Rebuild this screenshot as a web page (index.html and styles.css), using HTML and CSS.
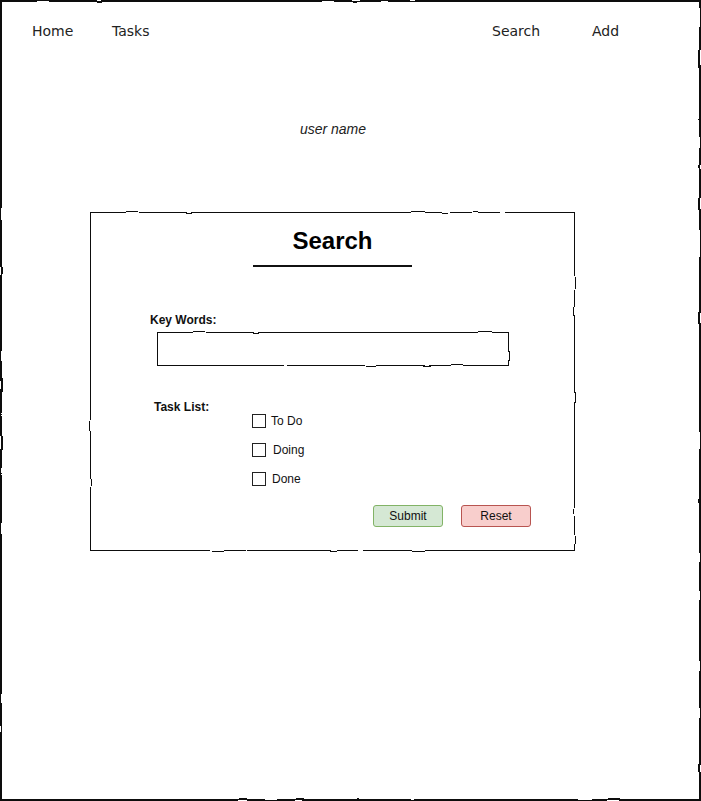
FILE: index.html
```html
<!DOCTYPE html>
<html>
<head>
<meta charset="utf-8">
<link rel="stylesheet" href="styles.css">
</head>
<body>
<svg class="defs" width="0" height="0" aria-hidden="true">
  <filter id="rough" x="-5%" y="-5%" width="110%" height="110%">
    <feTurbulence type="fractalNoise" baseFrequency="0.035" numOctaves="1" seed="7" result="n"/>
    <feDisplacementMap in="SourceGraphic" in2="n" scale="3" xChannelSelector="R" yChannelSelector="G"/>
  </filter>
</svg>
<div class="frame sketch">
  <nav class="nav">
    <span class="nav-item w-home">Home</span>
    <span class="nav-item w-tasks">Tasks</span>
    <span class="nav-item w-search">Search</span>
    <span class="nav-item">Add</span>
  </nav>
  <main class="main">
    <div class="username">user name</div>
    <section class="card sketch">
      <h1 class="title">Search</h1>
      <div class="underline"></div>
      <div class="label kw">Key Words:</div>
      <div class="input sketch"></div>
      <div class="tasks">
        <div class="label tl">Task List:</div>
        <div class="options">
          <div class="opt"><span class="box"></span><span class="opt-text g5">To Do</span></div>
          <div class="opt"><span class="box"></span><span class="opt-text g7">Doing</span></div>
          <div class="opt"><span class="box"></span><span class="opt-text g6">Done</span></div>
        </div>
      </div>
      <div class="buttons">
        <span class="btn submit">Submit</span>
        <span class="btn reset">Reset</span>
      </div>
    </section>
  </main>
</div>
</body>
</html>
```

FILE: styles.css
```css
html, body {
  margin: 0;
  padding: 0;
  background: #fff;
}
.defs {
  position: absolute;
  width: 0;
  height: 0;
}
.frame {
  position: relative;
  width: 701px;
  height: 801px;
  box-sizing: border-box;
  overflow: hidden;
}
.sketch {
  position: relative;
}
.sketch::before {
  content: "";
  position: absolute;
  inset: 0;
  border: 1.3px solid #111;
  filter: url(#rough);
  pointer-events: none;
}
.frame.sketch::before {
  inset: 0;
  border-width: 2px;
}
.nav {
  display: flex;
  padding: 23px 0 0 32px;
  font-family: "DejaVu Sans", Verdana, sans-serif;
  font-size: 14px;
  line-height: 17px;
  color: #222;
}
.w-home { width: 80px; }
.w-tasks { width: 380px; }
.w-search { width: 100px; }
.main {
  width: 485px;
  margin-left: 90px;
  font-family: "Liberation Sans", Arial, sans-serif;
}
.username {
  margin: 81px 0 0 1px;
  text-align: center;
  font-style: italic;
  font-size: 14px;
  line-height: 17px;
  color: #222;
}
.card {
  margin-top: 74px;
  height: 339px;
  box-sizing: border-box;
  padding: 15px 1px 0 1px;
}
.title {
  margin: 0;
  text-align: center;
  font-size: 24px;
  line-height: 28px;
  font-weight: bold;
  color: #000;
}
.underline {
  width: 159px;
  height: 2px;
  background: #111;
  margin: 10px auto 0;
}
.label {
  font-size: 12px;
  line-height: 14px;
  font-weight: bold;
  color: #111;
}
.kw {
  margin: 46px 0 0 59px;
}
.input {
  margin: 5px 0 0 66px;
  width: 352px;
  height: 34px;
}
.tasks {
  display: flex;
  margin-top: 34px;
}
.tl {
  margin-left: 63px;
  width: 98px;
}
.options {
  margin-top: 14px;
  display: flex;
  flex-direction: column;
  gap: 15px;
}
.opt {
  display: flex;
  align-items: center;
  height: 14px;
  font-size: 12px;
  color: #111;
}
.box {
  width: 12px;
  height: 12px;
  border: 1px solid #222;
  display: inline-block;
}
.g5 { margin-left: 5px; }
.g6 { margin-left: 6px; }
.g7 { margin-left: 7px; }
.buttons {
  display: flex;
  gap: 18px;
  margin: 19px 0 0 282px;
}
.btn {
  width: 70px;
  height: 22px;
  box-sizing: border-box;
  border-radius: 3px;
  display: flex;
  align-items: center;
  justify-content: center;
  font-size: 12px;
  color: #111;
}
.submit {
  background: #d5e8d4;
  border: 1px solid #82b366;
}
.reset {
  background: #f8cecc;
  border: 1px solid #b85450;
}
```
